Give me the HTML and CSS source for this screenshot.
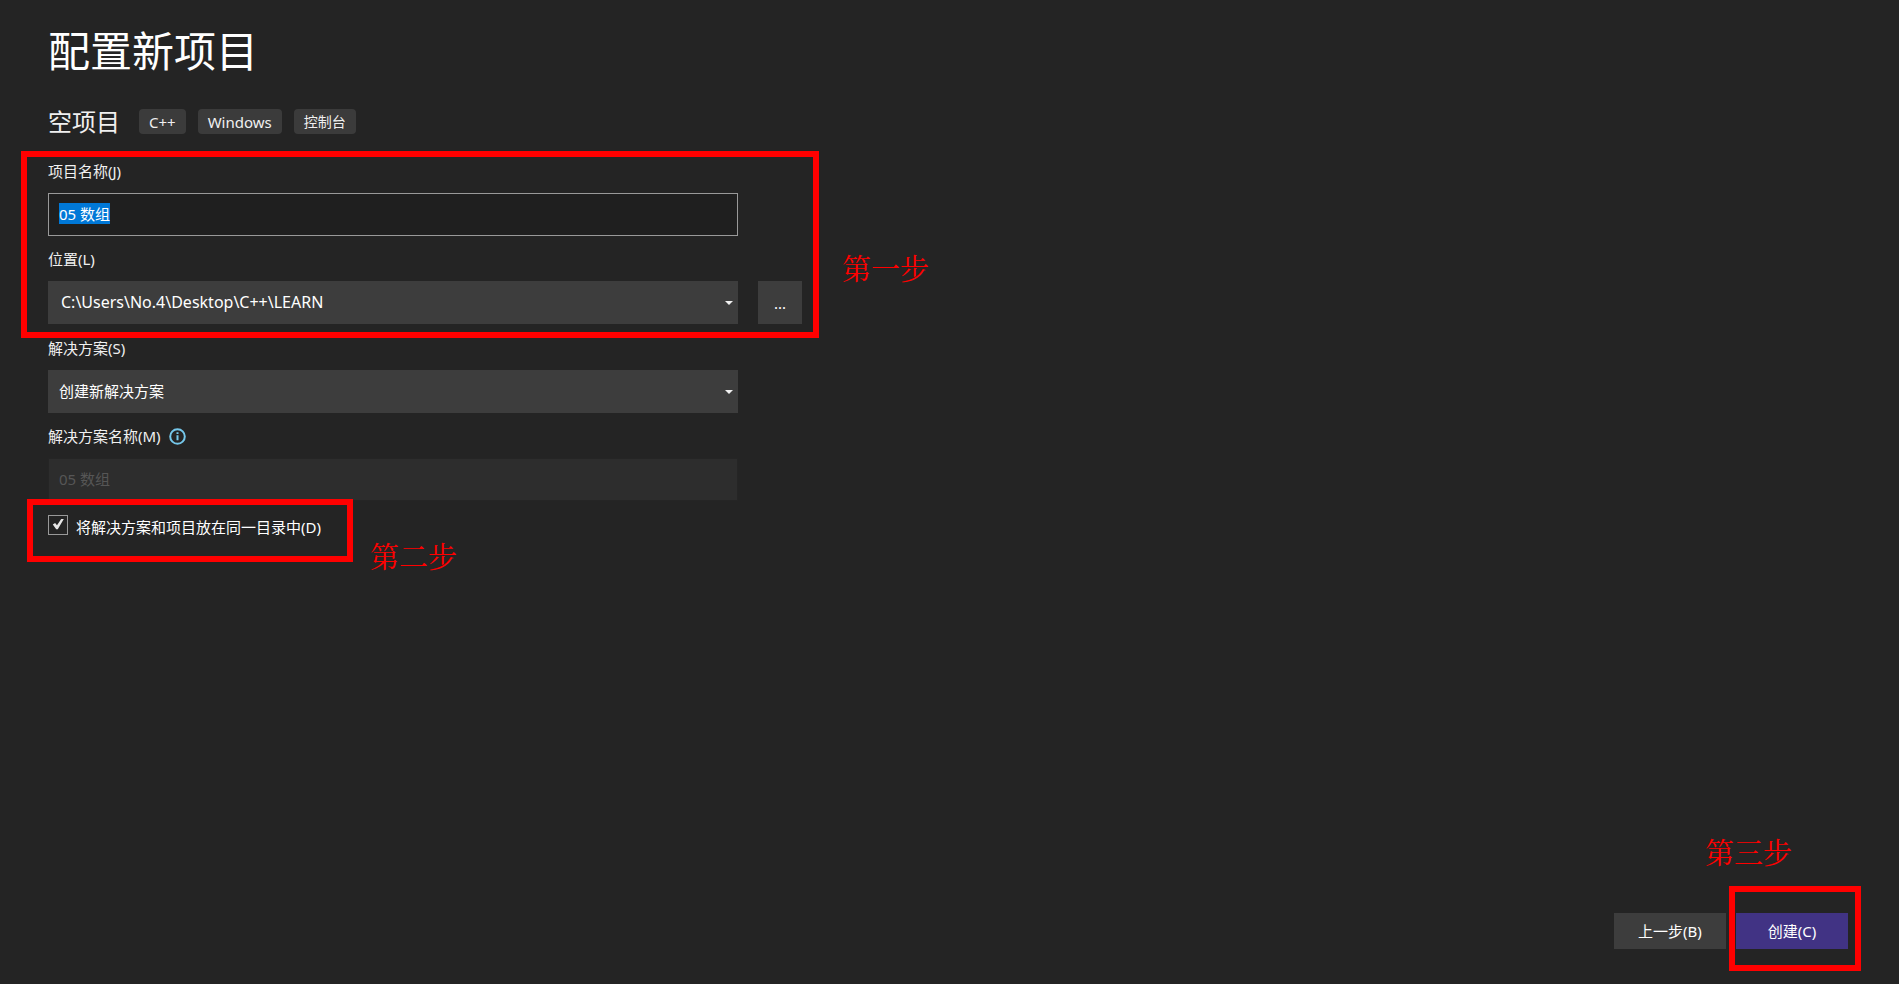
FILE: index.html
```
<!DOCTYPE html>
<html lang="zh-CN">
	<head>
		<meta charset="utf-8">
		<title>配置新项目</title>
		<link rel="stylesheet" href="styles.css">
	</head>
	<body>
		<div class="page">
			<h1 class="title">配置新项目</h1>
			<div class="template">
				<h2 class="template-name">空项目</h2>
				<span class="tag">C++</span>
				<span class="tag">Windows</span>
				<span class="tag tag-cn">控制台</span>
			</div>
			<form class="form" id="form">
				<div class="step step-one">
					<label class="label" for="name">项目名称(J)</label>
					<div class="field">
						<input class="control textbox" id="name" type="text" value="05 数组" autocomplete="off" spellcheck="false">
					</div>
					<label class="label" for="location">位置(L)</label>
					<div class="row">
						<div class="combo">
							<select class="control select path" id="location">
								<option>C:\Users\No.4\Desktop\C++\LEARN</option>
							</select>
							<svg class="arrow" width="8" height="4" viewBox="0 0 8 4"><path d="M0 0h8L4 4z"/></svg>
						</div>
						<button class="browse" type="button">...</button>
					</div>
					<div class="frame"></div>
					<div class="note">第一步</div>
				</div>
				<label class="label" for="solution">解决方案(S)</label>
				<div class="field combo">
					<select class="control select" id="solution">
						<option>创建新解决方案</option>
					</select>
					<svg class="arrow" width="8" height="4" viewBox="0 0 8 4"><path d="M0 0h8L4 4z"/></svg>
				</div>
				<label class="label" for="solution-name">解决方案名称(M)
					<svg class="info" width="17" height="17" viewBox="0 0 17 17">
						<circle cx="8.5" cy="8.5" r="7.3"/>
						<path d="M8.5 7.3v5M8.5 4.2v1.9"/>
					</svg>
				</label>
				<div class="field">
					<input class="control textbox" id="solution-name" type="text" value="05 数组" disabled>
				</div>
				<div class="step step-two">
					<input class="checkbox" id="same-dir" type="checkbox" checked>
					<label for="same-dir">将解决方案和项目放在同一目录中(D)</label>
					<svg class="tick" width="20" height="20" viewBox="0 0 20 20"><path d="M4.8 9.6l2.3-1.6 1.9 2.3 4.2-6.2h2.6L9.8 14.2H8.2z"/></svg>
					<div class="frame"></div>
					<div class="note">第二步</div>
				</div>
			</form>
			<div class="footer">
				<button class="button" type="button">上一步(B)</button>
				<div class="step step-three">
					<button class="button primary" type="submit" form="form">创建(C)</button>
					<div class="frame"></div>
					<div class="note">第三步</div>
				</div>
			</div>
		</div>
		<script>
			const nameInput=document.getElementById('name');
			nameInput.focus();
			nameInput.select();
		</script>
	</body>
</html>
```
FILE: styles.css
```
* {
  margin: 0;
  padding: 0;
  box-sizing: border-box;
}

body {
  background-color: #242424;
  color: #f0f0f0;
  font-family: "Noto Sans", "Noto Sans CJK SC", sans-serif;
  font-size: 15px;
  line-height: 24px;
}

button,
input,
select {
  font: inherit;
  color: inherit;
}

.page {
  min-height: 100vh;
  padding: 20px 51px 35px 48px;
  display: flex;
  flex-direction: column;
}

.title {
  color: #fff;
  font-size: 42px;
  font-weight: 400;
  line-height: 62px;
}

.template {
  display: flex;
  align-items: center;
  gap: 12px;
  margin: 27px 0 14px;
}

.template-name {
  font-size: 24px;
  font-weight: 400;
  line-height: 24px;
  margin-right: 7px;
}

.tag {
  background-color: #3b3b3b;
  border-radius: 4px;
  height: 25px;
  line-height: 24px;
  padding: 1px 10px 0;
}

.tag-cn {
  font-size: 14px;
}

.form {
  width: 100%;
  max-width: 754px;
}

.step {
  position: relative;
}

.label {
  display: flex;
  align-items: center;
  gap: 8px;
  padding: 11px 0 10px;
}

.field {
  margin-right: 64px;
}

.row {
  display: flex;
  gap: 20px;
}

.combo {
  position: relative;
  flex: 1;
}

.control {
  display: block;
  width: 100%;
  height: 43px;
  color: #fff;
  border: none;
  border-radius: 0;
  outline: none;
}

.textbox {
  background-color: #1f1f1f;
  border: 1px solid #999;
  padding: 0 10px 2px;
}

.textbox::selection {
  background-color: #0078d7;
  color: #fff;
}

.textbox:disabled {
  background-color: #2d2d2d;
  border-color: #252525;
  color: #565656;
}

.select {
  appearance: none;
  background-color: #3d3d3d;
  padding: 0 24px 2px 11px;
}

.select.path {
  font-size: 16px;
  padding-left: 13px;
}

.arrow {
  position: absolute;
  right: 5px;
  top: 20px;
  fill: #f0f0f0;
  pointer-events: none;
}

.browse {
  width: 44px;
  height: 43px;
  background-color: #3d3d3d;
  color: #fff;
  border: none;
}

.info {
  fill: none;
  stroke: #75c7ea;
  stroke-width: 2;
}

.step-one {
  margin-bottom: 1px;
}

.step-two {
  display: flex;
  gap: 8px;
  width: max-content;
  margin-top: 14px;
  color: #fff;
  line-height: 24px;
}

.checkbox {
  appearance: none;
  width: 20px;
  height: 20px;
  border: 1px solid #999;
}

.tick {
  position: absolute;
  left: 0;
  top: 0;
  fill: #e6e6e6;
  pointer-events: none;
}

.checkbox:not(:checked) ~ .tick {
  display: none;
}

.footer {
  display: flex;
  justify-content: flex-end;
  gap: 10px;
  margin-top: auto;
}

.button {
  display: block;
  width: 112px;
  height: 36px;
  background-color: #3d3d3d;
  color: #fff;
  border: none;
}

.primary {
  background-color: #413384;
}

/* red frames and notes over the steps */
.frame {
  position: absolute;
  border: 6px solid #f00;
  pointer-events: none;
}

.note {
  position: absolute;
  color: #f00;
  font-family: "Noto Serif CJK SC", "Liberation Serif", serif;
  font-size: 29px;
  line-height: 32px;
  white-space: nowrap;
}

.step-one .frame {
  inset: 3px -17px -14px -27px;
}

.step-one .note {
  left: 100%;
  top: 104px;
  margin-left: 40px;
}

.step-two .frame {
  inset: -16px -32px -23px -21px;
}

.step-two .note {
  left: 100%;
  top: 25px;
  margin-left: 49px;
}

.step-three .frame {
  inset: -27px -13px -22px -7px;
}

.step-three .note {
  right: 56px;
  top: -77px;
}
```
